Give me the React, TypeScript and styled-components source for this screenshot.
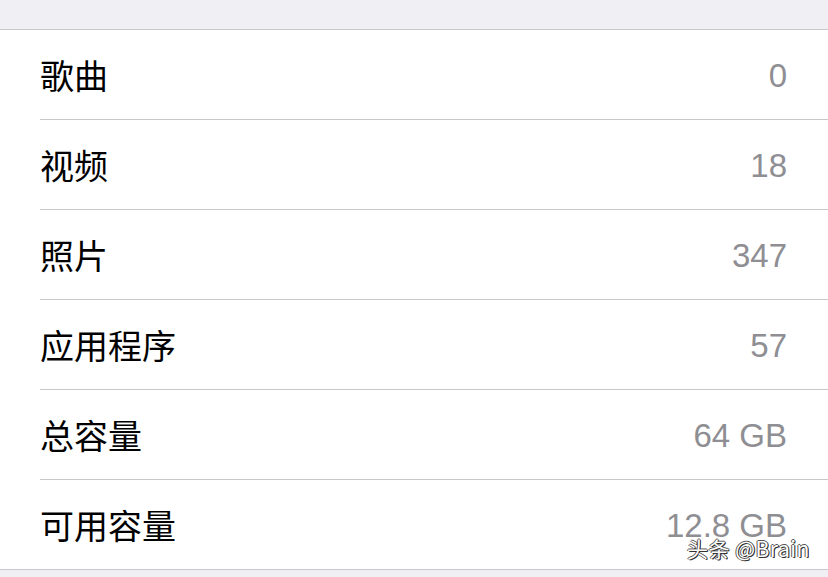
import React from "react";
import styled, { createGlobalStyle } from "styled-components";

const Global = createGlobalStyle`
  html, body { margin: 0; padding: 0; background: #efeff4; }
  body { font-family: "Noto Sans CJK SC", "Liberation Sans", sans-serif; }
`;

const Page = styled.div`
  width: 828px;
  height: 577px;
  background: #efeff4;
  position: relative;
  overflow: hidden;
`;

const TopBand = styled.div`
  height: 29px;
`;

const Group = styled.div`
  background: #ffffff;
  border-top: 1px solid #c8c7cc;
  border-bottom: 1px solid #c8c7cc;
  padding-left: 40px;
`;

const Row = styled.div<{ $last?: boolean }>`
  height: 89px;
  display: flex;
  align-items: center;
  justify-content: space-between;
  padding-right: 41px;
  border-bottom: ${(p) => (p.$last ? "none" : "1px solid #c8c7cc")};
`;

const Label = styled.span`
  font-family: "Noto Sans CJK SC", sans-serif;
  font-size: 34px;
  color: #000;
  margin-top: -1px;
`;

const Value = styled.span`
  font-family: "Liberation Sans", "Noto Sans", sans-serif;
  font-size: 33px;
  color: #8e8e93;
  margin-top: 3px;
`;

const Watermark = styled.div`
  position: absolute;
  left: 687px;
  top: 533px;
  font-family: "Noto Sans CJK SC", "Liberation Sans", sans-serif;
  font-size: 21px;
  color: #ffffff;
  text-shadow: 1px 1px 0 #333, -1px 0 0 #555, 0 -1px 0 #555, 1px 0 0 #444;
  letter-spacing: 0.5px;
`;

const rows: [string, string][] = [
  ["歌曲", "0"],
  ["视频", "18"],
  ["照片", "347"],
  ["应用程序", "57"],
  ["总容量", "64 GB"],
  ["可用容量", "12.8 GB"],
];

export default function App() {
  return (
    <Page>
      <Global />
      <TopBand />
      <Group>
        {rows.map(([l, v], i) => (
          <Row key={l} $last={i === rows.length - 1}>
            <Label>{l}</Label>
            <Value>{v}</Value>
          </Row>
        ))}
      </Group>
      <Watermark>头条 @Brain</Watermark>
    </Page>
  );
}
